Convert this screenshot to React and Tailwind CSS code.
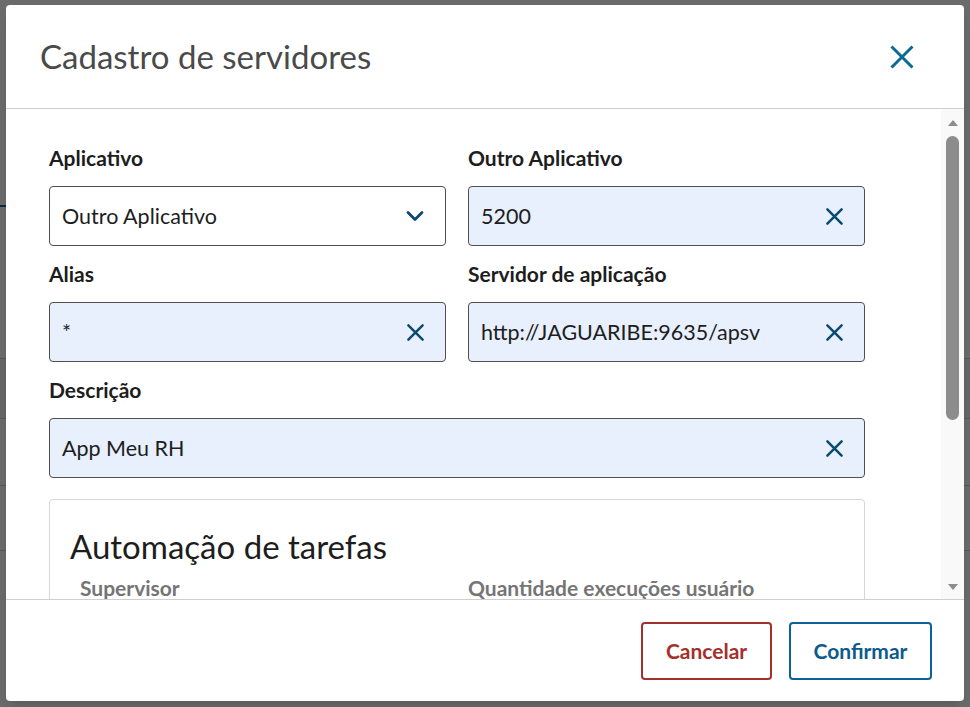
import { ChevronDown } from "lucide-react"

const font = { fontFamily: "Lato, 'Open Sans', sans-serif" }

const XIcon = ({ className }) => (
  <svg viewBox="0 0 20 20" className={className} fill="none" stroke="currentColor" strokeWidth="2.6" strokeLinecap="round">
    <path d="M2.5 2.5 17.5 17.5M17.5 2.5 2.5 17.5" />
  </svg>
)

function Field({ label, value, select, wide }) {
  return (
    <div className={wide ? "col-span-2" : ""}>
      <label className="block h-6 text-[21px] leading-6 font-bold text-[#1d1d1d]">{label}</label>
      <div
        className={`mt-4 flex h-[60px] items-center rounded-[4px] border border-[#4f4f4f] pl-3 pr-5 ${
          select ? "bg-white" : "bg-[#e8f0fe]"
        }`}
      >
        <span className="flex-1 truncate text-[21.5px] text-[#1d1d1d]">{value}</span>
        {select ? (
          <ChevronDown className="h-7 w-7 text-[#0b4a70] -mr-1" strokeWidth={2.4} />
        ) : (
          <XIcon className="h-[19px] w-[19px] text-[#0b4a70]" />
        )}
      </div>
    </div>
  )
}

function DisabledField({ label }) {
  return (
    <div>
      <label className="block h-6 text-[21px] leading-6 font-bold text-[#757575]">{label}</label>
      <div className="mt-4 h-[60px] rounded-[4px] border border-[#c7c7c7] bg-[#f2f2f2]"></div>
    </div>
  )
}

export default function App() {
  return (
    <div className="relative h-[707px] w-[970px] overflow-hidden bg-white" style={font}>
      {/* page underneath the modal */}
      <div className="pt-[205px]">
        <div className="h-[2px] w-[120px] bg-[#0c6c94]"></div>
        <div className="h-[152px] border-b border-[#d0d0d0]"></div>
        <div className="h-[60px] border-b border-[#d0d0d0] bg-[#f4f4f4]"></div>
        <div className="h-[67px] border-b border-[#d0d0d0]"></div>
        <div className="h-[65px] border-b border-[#d0d0d0]"></div>
      </div>

      {/* overlay */}
      <div className="absolute inset-0 bg-[#000000]/[0.58] pl-[6px] pt-[5px]">
        <div className="flex h-[696px] w-[958px] flex-col overflow-hidden rounded-[4px] bg-white shadow-lg">
          {/* header */}
          <div className="flex h-[104px] shrink-0 items-center justify-between border-b border-[#cfcfcf] pl-[34px] pr-[50px]">
            <h2 className="text-[33px] text-[#4a4a4a]">Cadastro de servidores</h2>
            <svg viewBox="0 0 24 24" className="h-6 w-6 text-[#0c6a97]" fill="none" stroke="currentColor" strokeWidth="3">
              <path d="M1.5 1.5 22.5 22.5M22.5 1.5 1.5 22.5" />
            </svg>
          </div>

          {/* body */}
          <div className="flex min-h-0 flex-1">
            <div className="min-w-0 flex-1 overflow-hidden pl-[43px] pt-[37px]">
              <div className="grid w-[816px] grid-cols-[397px_397px] gap-x-[22px] gap-y-4">
                <Field label="Aplicativo" value="Outro Aplicativo" select />
                <Field label="Outro Aplicativo" value="5200" />
                <Field label="Alias" value="*" />
                <Field label="Servidor de aplicação" value="http://JAGUARIBE:9635/apsv" />
                <Field label="Descrição" value="App Meu RH" wide />
              </div>

              <div className="mt-[21px] w-[816px] rounded-[4px] border border-[#d6d6d6] pb-6 pl-5 pt-[26px]">
                <h3 className="text-[33px] leading-10 text-[#1d1d1d]">Automação de tarefas</h3>
                <div className="mt-[10px] grid grid-cols-[388px_377px] gap-y-4 pl-[10px]">
                  <DisabledField label="Supervisor" />
                  <DisabledField label="Quantidade execuções usuário" />
                </div>
              </div>
            </div>

            {/* scrollbar */}
            <div className="flex w-[23px] shrink-0 flex-col items-center bg-[#f9f9f9]">
              <div className="flex h-[27px] items-center justify-center">
                <svg viewBox="0 0 10 6" className="h-[6px] w-[10px] text-[#8c8c8c]" fill="currentColor">
                  <path d="M5 0 10 6H0Z" />
                </svg>
              </div>
              <div className="h-[284px] w-[13px] rounded-full bg-[#8c8c8c]"></div>
              <div className="flex-1"></div>
              <div className="flex h-[27px] items-center justify-center pt-[2px]">
                <svg viewBox="0 0 10 6" className="h-[6px] w-[10px] text-[#8c8c8c]" fill="currentColor">
                  <path d="M0 0H10L5 6Z" />
                </svg>
              </div>
            </div>
          </div>

          {/* footer */}
          <div className="flex h-[102px] shrink-0 items-center justify-end gap-[17px] border-t border-[#cfcfcf] pr-8">
            <button className="h-[58px] w-[131px] rounded-[4px] border-2 border-[#a3302a] text-[21px] font-bold text-[#a3302a]">
              Cancelar
            </button>
            <button className="h-[58px] w-[143px] rounded-[4px] border-2 border-[#0c6296] text-[21px] font-bold text-[#0c5b8c]">
              Confirmar
            </button>
          </div>
        </div>
      </div>
    </div>
  )
}
